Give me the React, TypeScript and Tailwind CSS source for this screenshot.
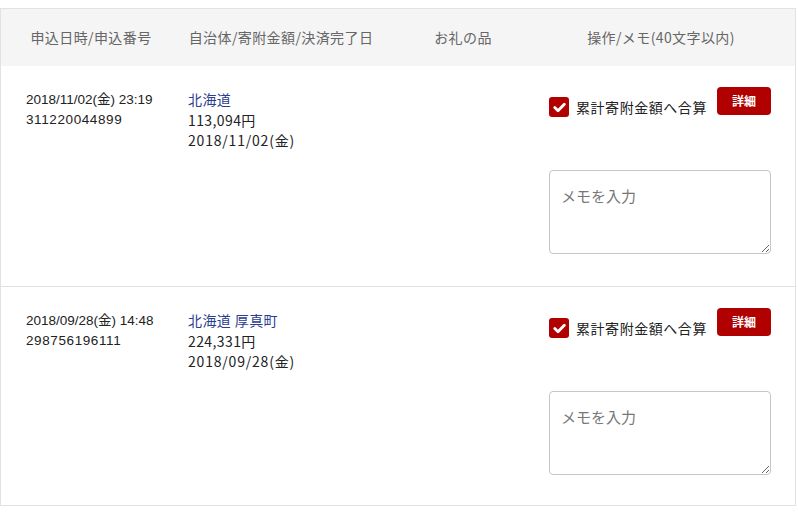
import React from 'react';

interface Donation {
  appliedAt: string;
  number: string;
  place: string;
  amount: string;
  paidOn: string;
}

const donations: Donation[] = [
  { appliedAt: '2018/11/02(金) 23:19', number: '311220044899', place: '北海道', amount: '113,094円', paidOn: '2018/11/02(金)' },
  { appliedAt: '2018/09/28(金) 14:48', number: '298756196111', place: '北海道 厚真町', amount: '224,331円', paidOn: '2018/09/28(金)' },
];

const jp = { fontFamily: '"Noto Sans CJK JP", sans-serif' };
const latin = { fontFamily: '"Liberation Sans", "Noto Sans CJK JP", sans-serif' };

const Row: React.FC<{ d: Donation; last?: boolean }> = ({ d, last }) => {
  return (
    <div className={`flex ${last ? 'h-[219px] border-t border-[#e2e2e2]' : 'h-[220px]'}`}>
      <div className="w-[180px] pl-[25px] pt-[24px] text-[13.5px] leading-[20px] text-[#222]" style={latin}>
        <div>{d.appliedAt}</div>
        <div className="tracking-[0.6px]">{d.number}</div>
      </div>
      <div className="w-[200px] pl-[7px] pt-[23px] text-[14px] leading-[20.5px] text-[#222] tracking-[0.4px]" style={jp}>
        <div className="text-[#2b3d8f]">{d.place}</div>
        <div>{d.amount}</div>
        <div className="tracking-[0.8px]">{d.paidOn}</div>
      </div>
      <div className="w-[164px]" />
      <div className="w-[232px] pl-[4px] pt-[21px]">
        <div className="flex w-[222px] items-start justify-between">
          <label className="mt-[10px] flex items-center" style={jp}>
            <span className="flex h-[20px] w-[20px] items-center justify-center rounded-[3px] bg-[#b00000]">
              <svg width="13" height="11" viewBox="0 0 13 11">
                <path d="M1.8 5.6 L5 8.8 L11.3 2.2" fill="none" stroke="#fff" strokeWidth="2.8" strokeLinecap="round" strokeLinejoin="round" />
              </svg>
            </span>
            <span className="ml-[7px] text-[14px] leading-[20px] tracking-[0.55px] text-[#222]">累計寄附金額へ合算</span>
          </label>
          <button className="h-[28px] w-[54px] rounded-[4px] bg-[#b00000] text-[12px] font-bold text-white" style={jp}>
            詳細
          </button>
        </div>
        <textarea
          placeholder="メモを入力"
          className="mt-[53px] block h-[84px] w-[222px] rounded-[4px] border border-[#c6c6c6] px-[11px] py-[14px] text-[15px] leading-[22px] text-[#222] placeholder:text-[#777] outline-none"
          style={jp}
        />
      </div>
    </div>
  );
};

export default function App() {
  return (
    <div className="min-h-[515px] bg-white pt-2">
      <div className="w-[796px] border border-[#e2e2e2]">
        <div className="flex h-[57px] items-center bg-[#f5f5f5] pb-[1px] text-[14px] tracking-[0.4px] text-[#666]" style={jp}>
          <div className="w-[180px] text-center">申込日時/申込番号</div>
          <div className="w-[200px] text-center">自治体/寄附金額/決済完了日</div>
          <div className="w-[164px] text-center">お礼の品</div>
          <div className="w-[232px] text-center">操作/メモ(40文字以内)</div>
        </div>
        {donations.map((d, i) => (
          <Row key={d.number} d={d} last={i === donations.length - 1} />
        ))}
      </div>
    </div>
  );
}
